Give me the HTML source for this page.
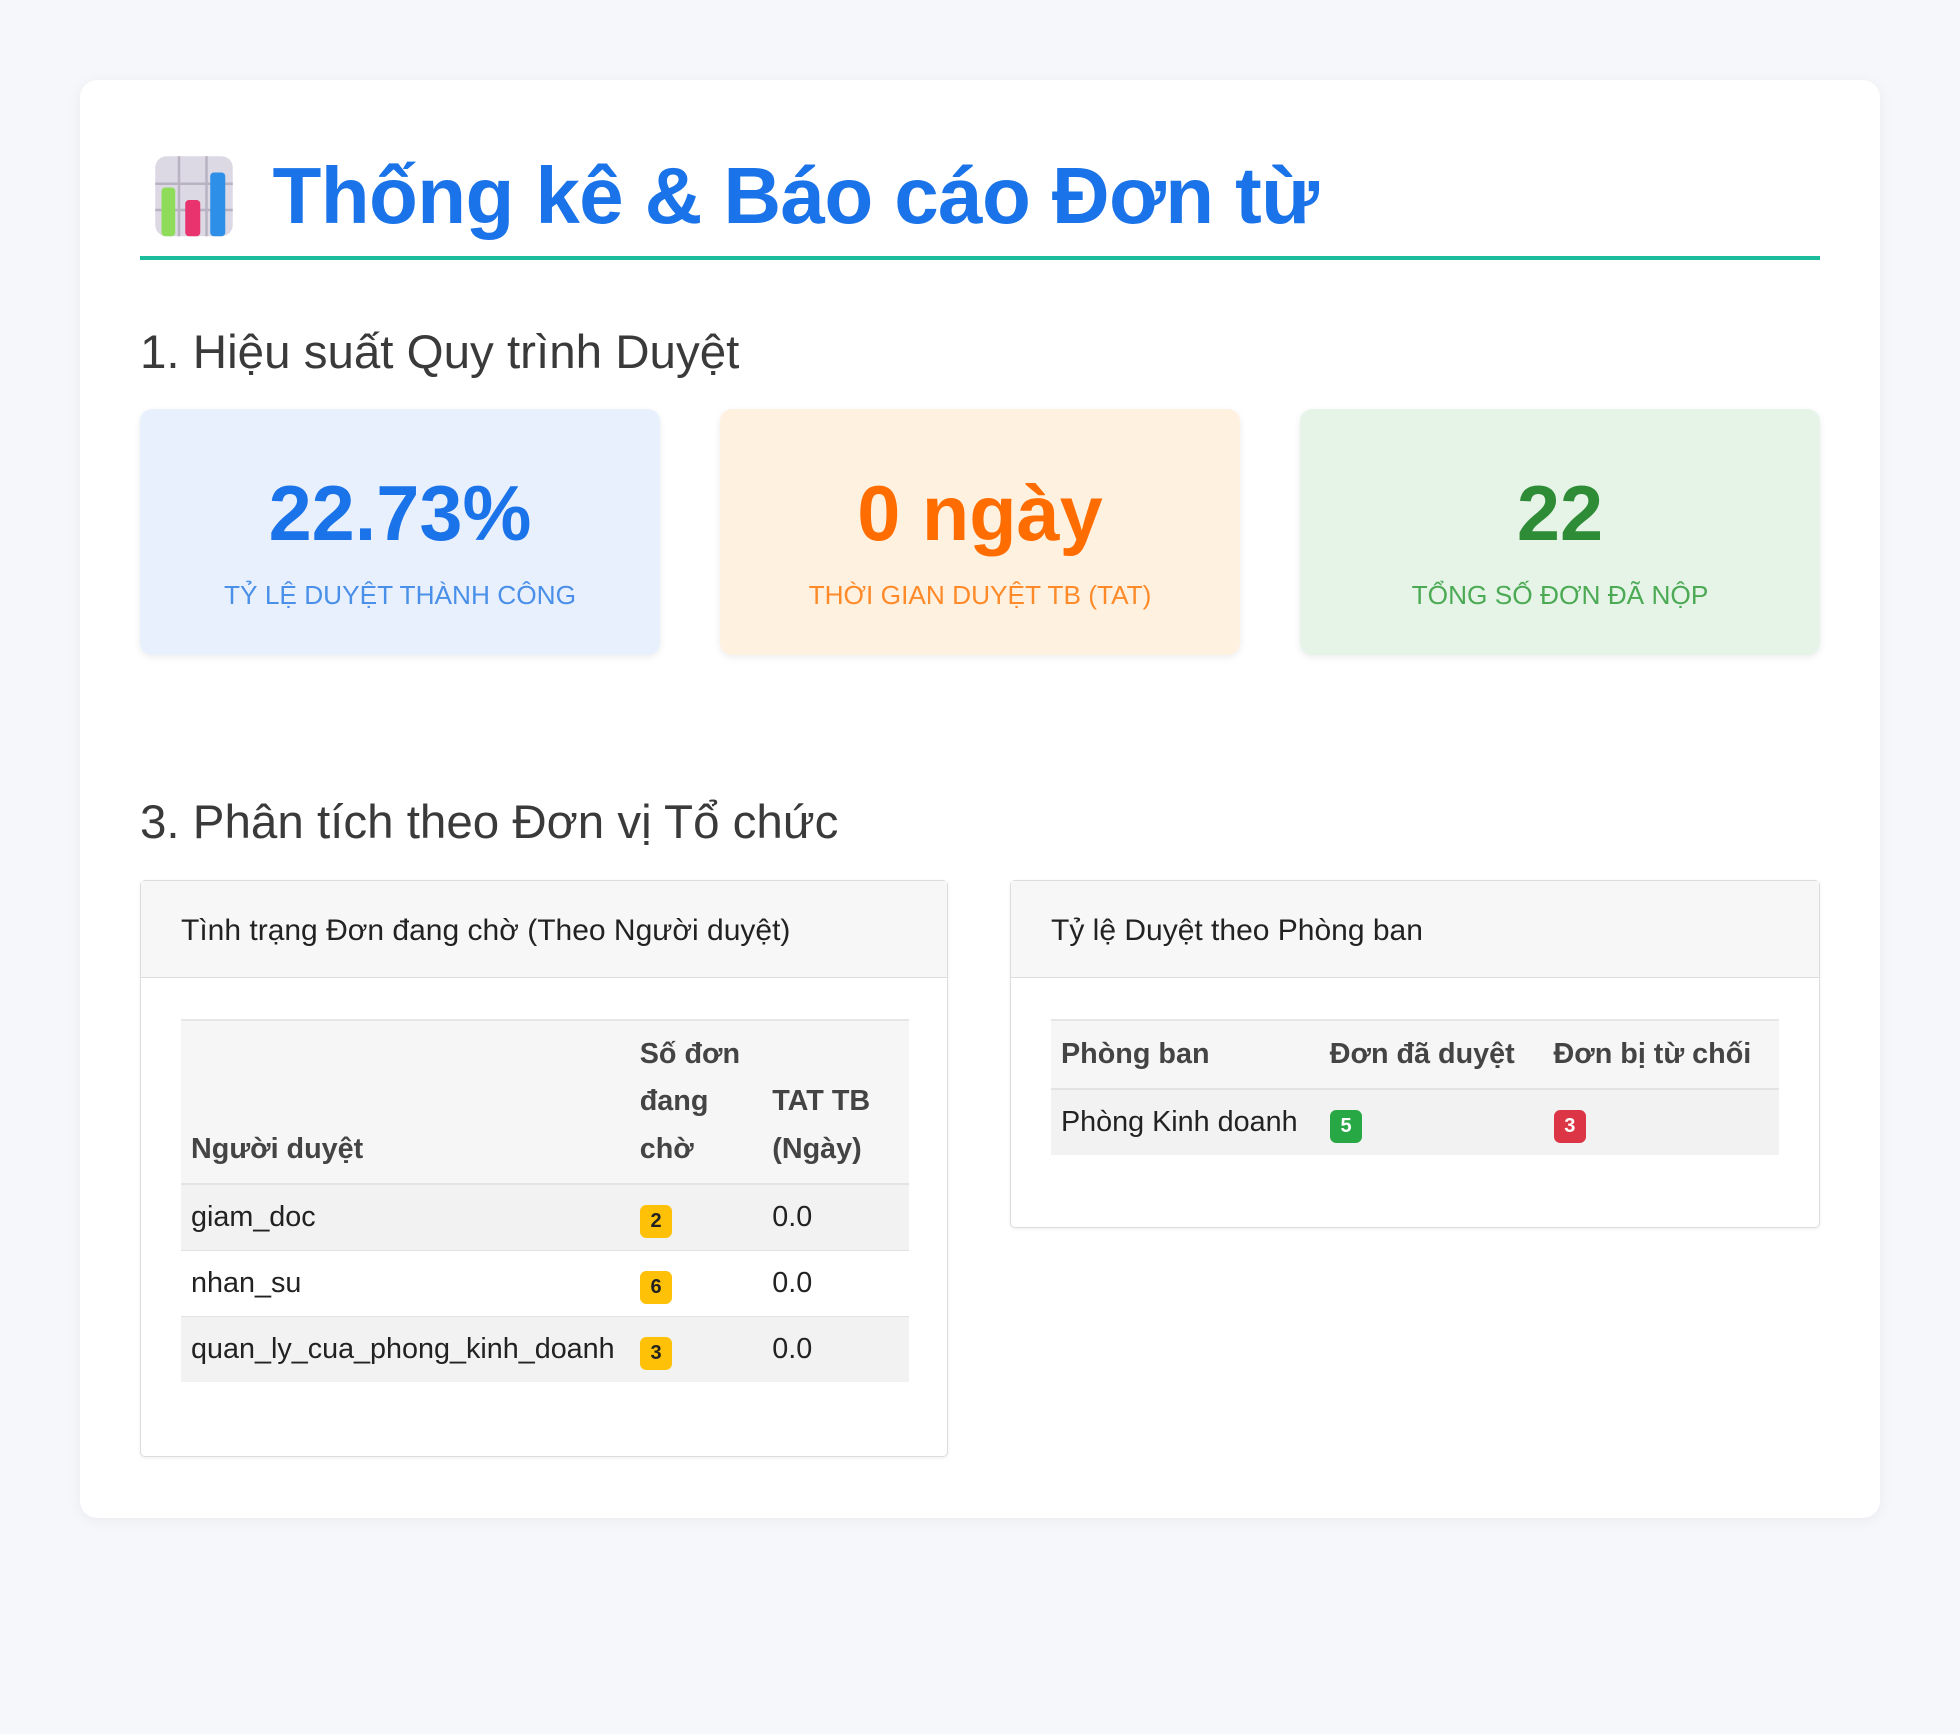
<!DOCTYPE html>
<html><head><meta charset="utf-8">
<style>
html,body{margin:0;padding:0}
body{zoom:1.25;background:#f5f7fa;font-family:"Liberation Sans","Noto Sans CJK SC",sans-serif;color:#333;width:1568px;height:1387px;overflow:hidden}
.card{position:absolute;left:64px;top:64px;width:1344px;height:1054px;padding:48px;background:#fff;border-radius:14px;box-shadow:0 2px 12px rgba(0,0,0,.05)}
h1{margin:0;position:absolute;left:59px;top:56px;font-size:64px;color:#1a73e8;font-weight:bold;display:flex;align-items:center;letter-spacing:-0.5px;white-space:nowrap}
h1 svg{margin-right:31px}
.line{position:absolute;left:48px;top:141px;width:1344px;height:3px;background:#1abc9c}
h2{margin:0;position:absolute;left:48px;font-size:38px;font-weight:normal;color:#3a3a3a;white-space:nowrap}
.stat{position:absolute;top:263px;width:416px;height:197px;border-radius:10px;box-shadow:0 2px 6px rgba(0,0,0,.08);text-align:center}
.stat .v{position:absolute;left:0;right:0;top:49px;font-size:62px;font-weight:bold}
.stat .l{position:absolute;left:0;right:0;top:137px;font-size:21px;text-transform:uppercase}
.panel{position:absolute;border:1px solid #ddd;border-radius:4px;box-shadow:0 1px 3px rgba(0,0,0,.06);background:#fff}
.ph{height:77px;background:#f7f7f7;border-bottom:1px solid #ddd;font-size:24px;line-height:80px;padding-left:32px;color:#222}
table{position:absolute;left:32px;border-collapse:collapse;table-layout:fixed;font-size:23px;color:#222}
th{text-align:left;vertical-align:bottom;font-weight:bold;color:#444;padding:8px;line-height:38px;background:#f6f6f6;border-top:2px solid #e6e6e6;border-bottom:2px solid #e3e3e3}
td{padding:0 8px;height:52px;border-bottom:1px solid #e3e3e3;white-space:nowrap}
tr.s td{background:#f2f2f2}
.b{display:inline-block;width:26px;height:27px;line-height:27px;border-radius:5px;text-align:center;font-size:16px;font-weight:bold;vertical-align:middle;position:relative;top:3px}
.y{background:#ffc107;color:#222}.g{background:#28a745;color:#fff}.r{background:#dc3545;color:#fff}
</style></head><body>
<div class="card">
<h1><svg width="64" height="66" viewBox="0 0 64 66"><rect x="1" y="1" width="62" height="64" rx="9" fill="#dcd8e4"/><g stroke="#b8b2c2" stroke-width="2"><line x1="20" y1="1" x2="20" y2="65"/><line x1="42" y1="1" x2="42" y2="65"/><line x1="1" y1="23" x2="63" y2="23"/><line x1="1" y1="44" x2="63" y2="44"/></g><rect x="6" y="26" width="11" height="39" rx="3" fill="#8fdc5a"/><rect x="25" y="36" width="12" height="29" rx="3" fill="#e8336f"/><rect x="45" y="14" width="12" height="51" rx="3" fill="#2d8fe8"/></svg>Thống kê &amp; Báo cáo Đơn từ</h1>
<div class="line"></div>
<h2 style="top:196px">1. Hiệu suất Quy trình Duyệt</h2>
<div class="stat" style="left:48px;background:#e8f0fe"><div class="v" style="color:#1a73e8">22.73%</div><div class="l" style="color:#4a90e8">Tỷ lệ duyệt thành công</div></div>
<div class="stat" style="left:512px;background:#fef1e0"><div class="v" style="color:#ff6d00">0 ngày</div><div class="l" style="color:#ff8a2a">Thời gian duyệt TB (TAT)</div></div>
<div class="stat" style="left:976px;background:#e6f4e8"><div class="v" style="color:#2e8b36">22</div><div class="l" style="color:#4caa55">Tổng số đơn đã nộp</div></div>
<h2 style="top:572px">3. Phân tích theo Đơn vị Tổ chức</h2>
<div class="panel" style="left:48px;top:640px;width:645px;height:460px">
<div class="ph">Tình trạng Đơn đang chờ (Theo Người duyệt)</div>
<table style="top:110px;width:582px"><colgroup><col style="width:359px"><col style="width:106px"><col style="width:117px"></colgroup>
<tr><th>Người duyệt</th><th>Số đơn đang chờ</th><th>TAT TB (Ngày)</th></tr>
<tr class="s"><td>giam_doc</td><td><span class="b y">2</span></td><td>0.0</td></tr>
<tr><td>nhan_su</td><td><span class="b y">6</span></td><td>0.0</td></tr>
<tr class="s"><td style="border:0">quan_ly_cua_phong_kinh_doanh</td><td style="border:0"><span class="b y">3</span></td><td style="border:0">0.0</td></tr>
</table></div>
<div class="panel" style="left:744px;top:640px;width:646px;height:277px">
<div class="ph">Tỷ lệ Duyệt theo Phòng ban</div>
<table style="top:110px;width:582px"><colgroup><col style="width:215px"><col style="width:179px"><col style="width:188px"></colgroup>
<tr><th style="padding:8px">Phòng ban</th><th>Đơn đã duyệt</th><th>Đơn bị từ chối</th></tr>
<tr class="s"><td style="border:0">Phòng Kinh doanh</td><td style="border:0"><span class="b g">5</span></td><td style="border:0"><span class="b r">3</span></td></tr>
</table></div>
</div>
</body></html>
